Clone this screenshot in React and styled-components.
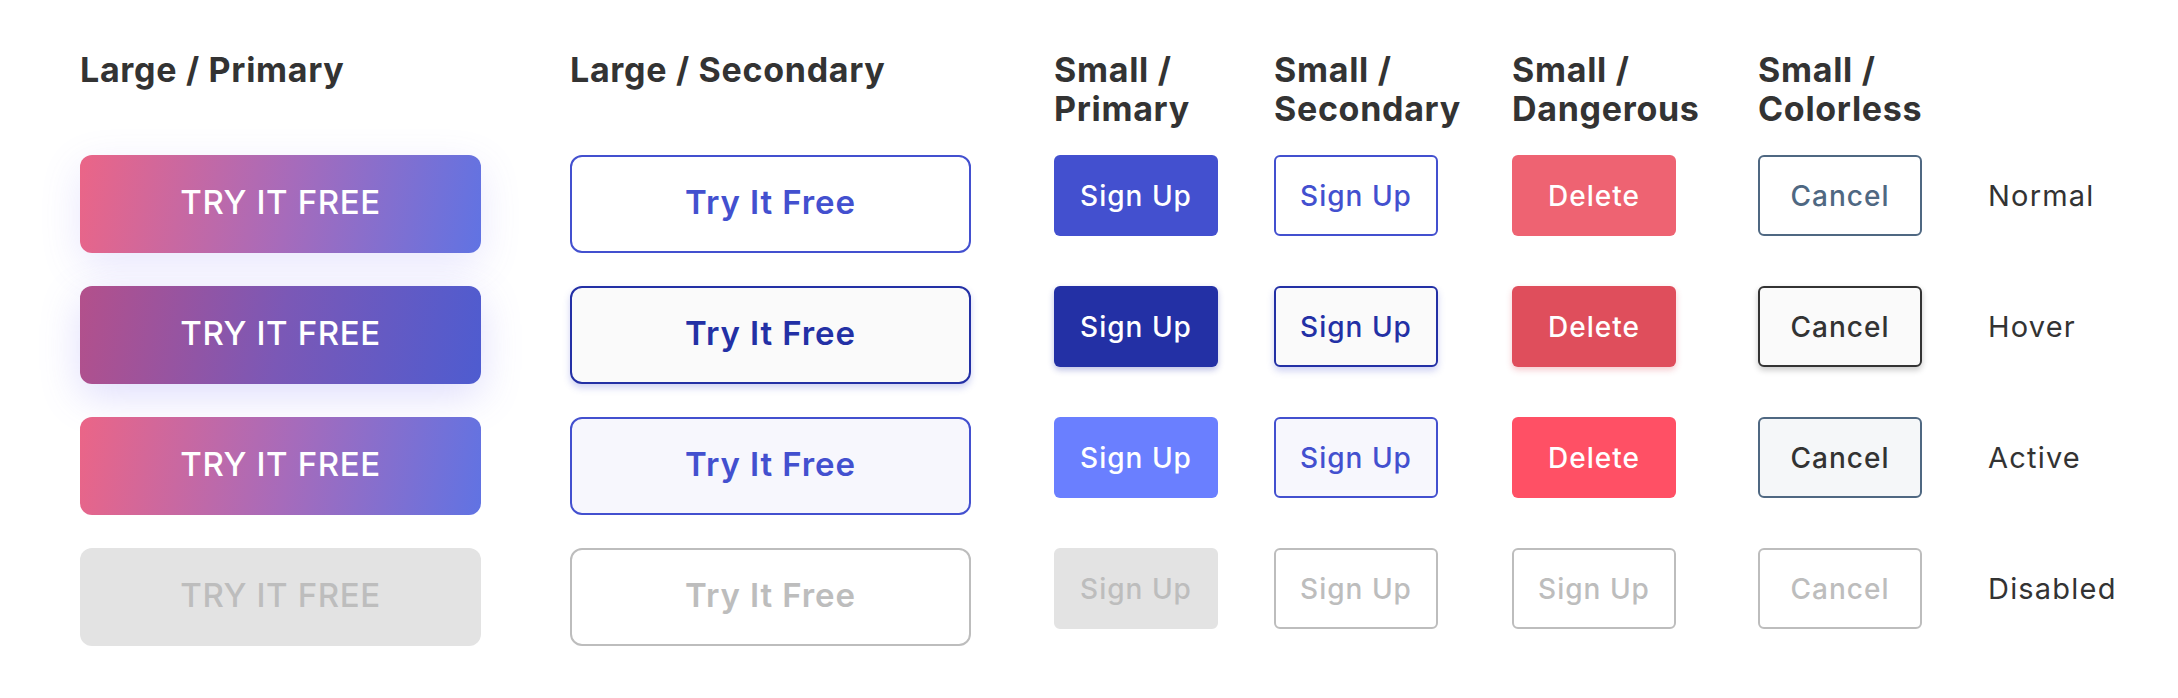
import React from "react";
import styled, { createGlobalStyle, css } from "styled-components";

const GlobalStyle = createGlobalStyle`
  body {
    margin: 0;
    background: #ffffff;
    font-family: "Inter", "Liberation Sans", sans-serif;
    color: #333333;
  }
`;

const Page = styled.div`
  padding: 50px 0 40px 80px;
`;

const Grid = styled.div`
  display: grid;
  grid-template-columns: 490px 484px 220px 238px 246px 230px auto;
  row-gap: 33px;
  align-items: start;
`;

const Heading = styled.div`
  font-size: 34px;
  line-height: 39px;
  font-weight: 700;
  letter-spacing: 0.7px;
  color: #333333;
  height: 72px;
  white-space: nowrap;
`;

const StateLabel = styled.div`
  height: 81px;
  display: flex;
  align-items: center;
  font-size: 29px;
  font-weight: 400;
  letter-spacing: 1.2px;
  color: #333333;
`;

const sizes = {
  large: css`
    width: 401px;
    height: 98px;
    border-radius: 12px;
    font-size: 33px;
    padding-bottom: 6px;
  `,
  small: css`
    width: 164px;
    height: 81px;
    border-radius: 6px;
    font-size: 28px;
    letter-spacing: 1px;
  `,
};

const disabledFill = css`
  background: #e3e3e3;
  border-color: #e3e3e3;
  color: #bdbdbd;
`;

const disabledLine = css`
  background: #ffffff;
  border-color: #bdbdbd;
  color: #bdbdbd;
`;

const looks = {
  gradient: {
    normal: css`
      border: none;
      background: linear-gradient(100deg, #eb6587 0%, #a66bbb 52%, #6073e3 100%);
      color: #ffffff;
      box-shadow: 0 12px 40px rgba(110, 100, 240, 0.16);
    `,
    hover: css`
      border: none;
      background: linear-gradient(100deg, #b3508b 0%, #7b58b6 50%, #4e5cd0 100%);
      color: #ffffff;
      box-shadow: 0 12px 40px rgba(110, 100, 240, 0.22);
    `,
    active: css`
      border: none;
      background: linear-gradient(100deg, #eb6587 0%, #a66bbb 52%, #6073e3 100%);
      color: #ffffff;
    `,
    disabled: css`
      border: none;
      background: #e3e3e3;
      color: #bdbdbd;
    `,
  },
  primary: {
    normal: css`
      background: #4350cf;
      color: #ffffff;
    `,
    hover: css`
      background: #2330a5;
      color: #ffffff;
      box-shadow: 0 3px 6px rgba(35, 48, 165, 0.3);
    `,
    active: css`
      background: #6a7fff;
      color: #ffffff;
    `,
    disabled: disabledFill,
  },
  secondary: {
    normal: css`
      background: #ffffff;
      border-color: #4350cf;
      color: #4350cf;
    `,
    hover: css`
      background: #fafafa;
      border-color: #2330a5;
      color: #2330a5;
      box-shadow: 0 4px 7px rgba(67, 80, 207, 0.25);
    `,
    active: css`
      background: #f7f7fd;
      border-color: #4350cf;
      color: #4350cf;
    `,
    disabled: disabledLine,
  },
  danger: {
    normal: css`
      background: #ee6372;
      color: #ffffff;
    `,
    hover: css`
      background: #df4e5c;
      color: #ffffff;
      box-shadow: 0 3px 6px rgba(223, 78, 92, 0.3);
    `,
    active: css`
      background: #ff5065;
      color: #ffffff;
    `,
    disabled: disabledLine,
  },
  colorless: {
    normal: css`
      background: #ffffff;
      border-color: #4f6882;
      color: #4f6882;
    `,
    hover: css`
      background: #fafafa;
      border-color: #333333;
      color: #333333;
      box-shadow: 0 3px 6px rgba(0, 0, 0, 0.22);
    `,
    active: css`
      background: #f5f7f9;
      border-color: #4f6882;
      color: #333333;
    `,
    disabled: disabledLine,
  },
};

const Button = styled.button`
  box-sizing: border-box;
  display: flex;
  align-items: center;
  justify-content: center;
  border: 2px solid transparent;
  font-family: "Inter", "Liberation Sans", sans-serif;
  font-weight: ${(p) => (p.$look === "secondary" && p.$size === "large" ? 600 : 500)};
  letter-spacing: ${(p) => (p.$look === "secondary" ? "0.9px" : "0.6px")};
  cursor: pointer;
  ${(p) => sizes[p.$size]}
  ${(p) => looks[p.$look][p.$state]}
`;

const columns = [
  { title: ["Large / Primary"], size: "large", look: "gradient", text: "TRY IT FREE" },
  { title: ["Large / Secondary"], size: "large", look: "secondary", text: "Try It Free" },
  { title: ["Small /", "Primary"], size: "small", look: "primary", text: "Sign Up" },
  { title: ["Small /", "Secondary"], size: "small", look: "secondary", text: "Sign Up" },
  { title: ["Small /", "Dangerous"], size: "small", look: "danger", text: "Delete", disabledText: "Sign Up" },
  { title: ["Small /", "Colorless"], size: "small", look: "colorless", text: "Cancel" },
];

const states = [
  { key: "normal", label: "Normal" },
  { key: "hover", label: "Hover" },
  { key: "active", label: "Active" },
  { key: "disabled", label: "Disabled" },
];

export default function App() {
  return (
    <Page>
      <GlobalStyle />
      <Grid>
        {columns.map((col) => (
          <Heading key={col.title.join()}>
            {col.title.map((line) => (
              <div key={line}>{line}</div>
            ))}
          </Heading>
        ))}
        <div />
        {states.map((st) => (
          <React.Fragment key={st.key}>
            {columns.map((col) => (
              <Button
                key={col.title.join()}
                $size={col.size}
                $look={col.look}
                $state={st.key}
                disabled={st.key === "disabled"}
              >
                {st.key === "disabled" && col.disabledText ? col.disabledText : col.text}
              </Button>
            ))}
            <StateLabel>{st.label}</StateLabel>
          </React.Fragment>
        ))}
      </Grid>
    </Page>
  );
}
